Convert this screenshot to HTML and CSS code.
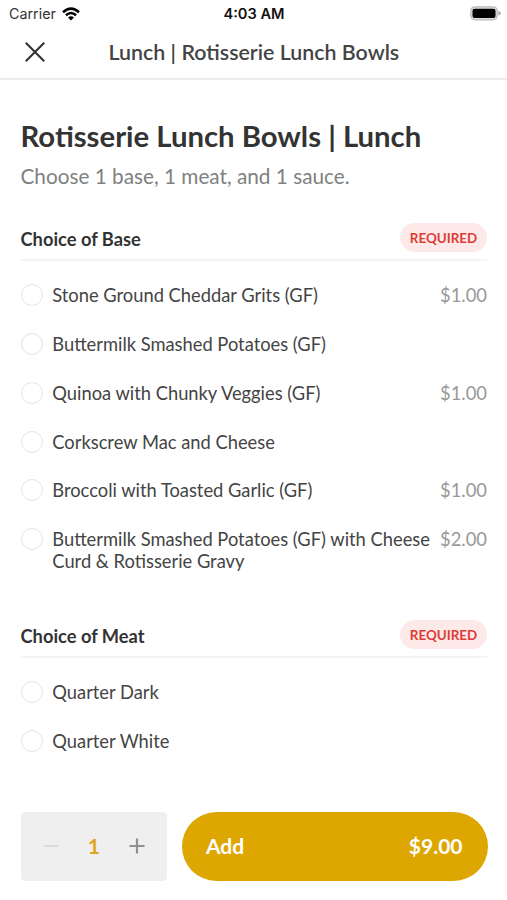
FILE: index.html
```html
<!DOCTYPE html>
<html lang="en">
<head>
<meta charset="utf-8">
<meta name="viewport" content="width=device-width, initial-scale=1">
<title>Rotisserie Lunch Bowls</title>
<link rel="stylesheet" href="styles.css">
</head>
<body>
<div class="screen">
  <div class="status">
    <div class="carrier"><span>Carrier</span>
      <svg class="wifi" width="18" height="14" viewBox="0 0 18 14"><g fill="none" stroke="#000" stroke-width="2.5"><path d="M1 5.2Q9-2 17 5.2"/><path d="M3.9 8.3Q9 3.8 14.1 8.3"/></g><path d="M6 10.4Q9 8 12 10.4L9 13.5Z"/></svg>
    </div>
    <span class="time">4:03 AM</span>
    <svg class="battery" width="31" height="15" viewBox="0 0 31 15"><rect x=".8" y=".8" width="26.4" height="13" rx="4" fill="#ddd" stroke="#bbb" stroke-width="1.2"/><rect x="2.5" y="2.7" width="23" height="9.3" rx="2"/><path d="M28.4 5q2.4.5 2.4 2.3t-2.4 2.3z" fill="#aaa"/></svg>
  </div>
  <header class="nav">
    <svg class="close" width="20" height="20" viewBox="0 0 20 20"><path d="M.8.8l18.4 18.4M19.2.8L.8 19.2" stroke="#333" stroke-width="2.1"/></svg>
    <span class="nav-title">Lunch | Rotisserie Lunch Bowls</span>
  </header>
  <main class="content">
    <h1>Rotisserie Lunch Bowls | Lunch</h1>
    <p class="intro">Choose 1 base, 1 meat, and 1 sauce.</p>
    <section>
      <div class="group"><h2>Choice of Base</h2><span class="badge">REQUIRED</span></div>
      <ul>
        <li><i class="radio"></i><span class="name">Stone Ground Cheddar Grits (GF)</span><span class="price">$1.00</span></li>
        <li><i class="radio"></i><span class="name">Buttermilk Smashed Potatoes (GF)</span></li>
        <li><i class="radio"></i><span class="name">Quinoa with Chunky Veggies (GF)</span><span class="price">$1.00</span></li>
        <li><i class="radio"></i><span class="name">Corkscrew Mac and Cheese</span></li>
        <li><i class="radio"></i><span class="name">Broccoli with Toasted Garlic (GF)</span><span class="price">$1.00</span></li>
        <li><i class="radio"></i><span class="name">Buttermilk Smashed Potatoes (GF) with Cheese<br>Curd &amp; Rotisserie Gravy</span><span class="price">$2.00</span></li>
      </ul>
    </section>
    <section>
      <div class="group"><h2>Choice of Meat</h2><span class="badge">REQUIRED</span></div>
      <ul>
        <li><i class="radio"></i><span class="name">Quarter Dark</span></li>
        <li><i class="radio"></i><span class="name">Quarter White</span></li>
      </ul>
    </section>
  </main>
  <footer class="bar">
    <div class="stepper">
      <svg width="16" height="16" viewBox="0 0 16 16"><path d="M.5 8h15" stroke="#dcdcdc" stroke-width="2"/></svg>
      <span class="count">1</span>
      <svg width="16" height="16" viewBox="0 0 16 16"><path d="M.5 8h15M8 .5v15" stroke="#909090" stroke-width="2.2"/></svg>
    </div>
    <div class="add"><span>Add</span><span>$9.00</span></div>
  </footer>
</div>
</body>
</html>
```
FILE: styles.css
```css
* { box-sizing: border-box; }
body, h1, h2, p, ul { margin: 0; padding: 0; }
body { background: #fff; color: #444; font-family: Lato, sans-serif; }
.screen { width: 507px; height: 900px; display: flex; flex-direction: column; overflow: hidden; }
.status { height: 27px; flex: none; display: grid; grid-template-columns: 1fr auto 1fr; align-items: center; padding: 0 8px 0 9px; font-family: Inter, sans-serif; font-size: 14.3px; color: #333; }
.carrier { display: flex; align-items: center; gap: 6px; }
.time { font-weight: 600; color: #111; font-size: 14.6px; }
.battery { justify-self: end; margin-right: -2px; }
.nav { height: 53px; flex: none; display: flex; align-items: center; border-bottom: 2px solid #ededed; padding: 0 0 2px 25px; }
.close { flex: none; margin-right: 63.5px; }
.nav-title { font-size: 21.4px; font-weight: 600; line-height: 24px; white-space: nowrap; }
.content { flex: 1; min-height: 0; padding: 37px 20px 0 20.5px; }
h1 { font-size: 29.3px; line-height: 38px; font-weight: 700; color: #333; white-space: nowrap; }
.intro { font-size: 20.75px; line-height: 26px; margin-top: 8px; color: #808080; white-space: nowrap; }
section { margin-top: 27px; }
section + section { margin-top: 40.3px; }
.group { height: 45px; display: flex; align-items: center; justify-content: space-between; border-bottom: 2px solid #f4f4f4; }
h2 { font-size: 18.3px; font-weight: 700; line-height: 24px; color: #333; padding-top: 3px; }
.badge { width: 87px; height: 29px; border-radius: 15px; background: #fee9e9; color: #dc3c38; font-size: 13.4px; font-weight: 700; line-height: 30px; text-align: center; }
ul { list-style: none; padding-top: 23.2px; display: flex; flex-direction: column; gap: 26.62px; }
li { display: flex; align-items: flex-start; font-size: 18.32px; line-height: 22.2px; }
.radio { width: 22px; height: 22px; flex: none; border: 1.5px solid #e4e4e4; border-radius: 50%; margin-right: 9.8px; }
.name { flex: 1; white-space: nowrap; }
.price { color: #999; font-size: 18.4px; }
.bar { height: 107px; flex: none; display: flex; gap: 15px; padding: 19px 19.5px 19px 20.5px; }
.stepper { width: 146.5px; height: 68.5px; background: #efefef; border-radius: 4px; display: flex; align-items: center; justify-content: space-between; padding: 0 22.5px; }
.count { font-size: 21px; font-weight: 700; color: #dfa520; position: relative; top: -1px; }
.add { flex: 1; height: 68.5px; border-radius: 35px; background: #dea600; display: flex; align-items: center; justify-content: space-between; padding: 0 25px 1px 24px; color: #fff; font-size: 21px; font-weight: 700; }
```
